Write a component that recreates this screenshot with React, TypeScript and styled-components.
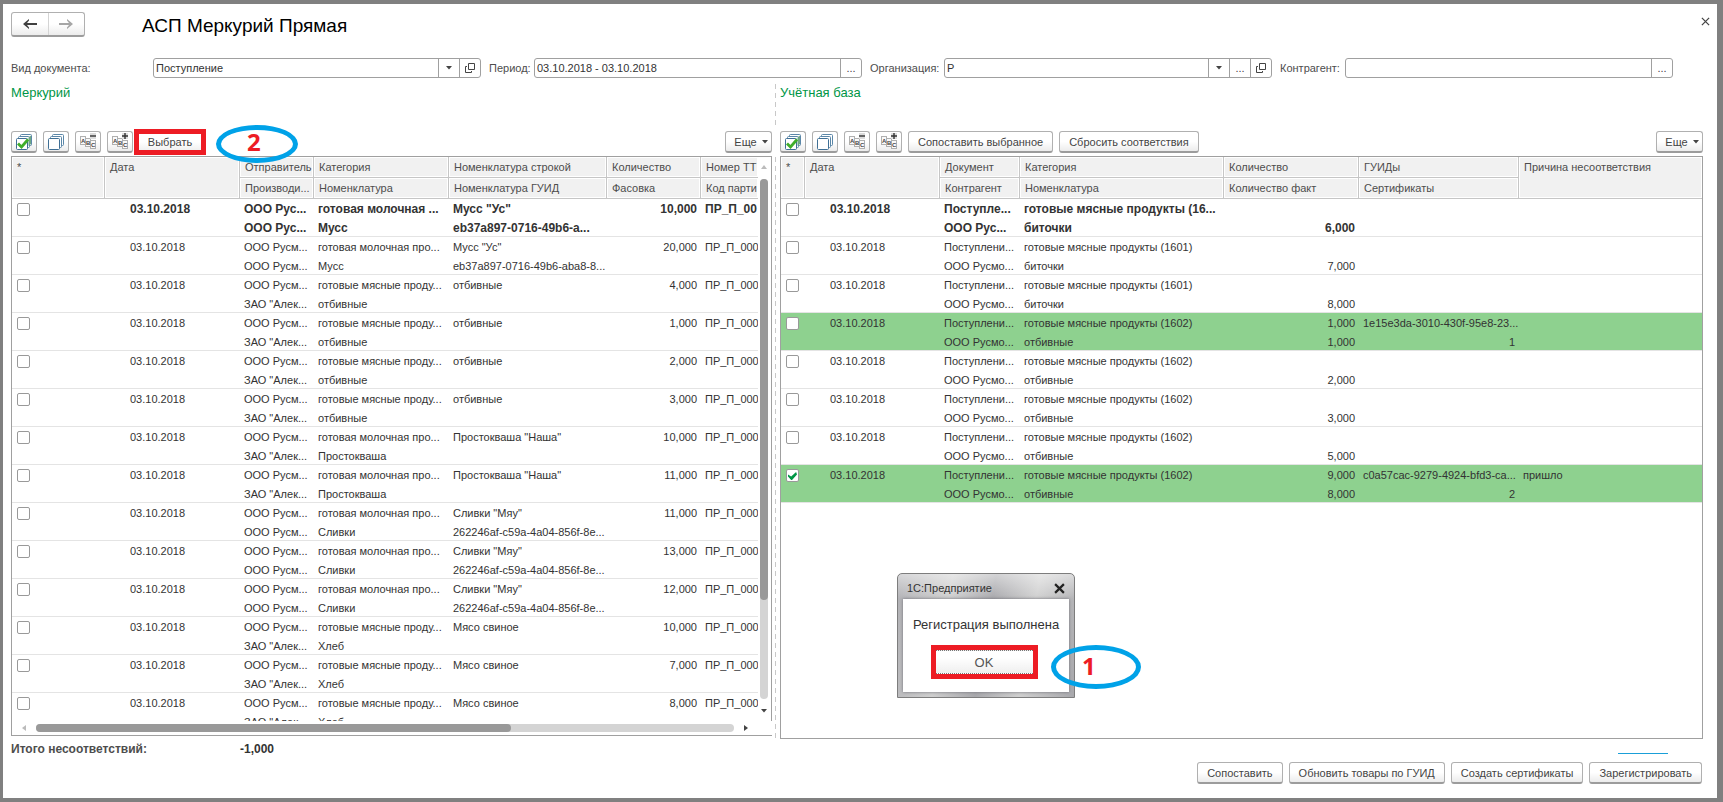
import React from "react";
import styled, { createGlobalStyle, css } from "styled-components";

const GlobalStyle = createGlobalStyle`
  *, *::before, *::after { box-sizing: border-box; }
  body {
    margin: 0;
    background: #808080;
    color: #333;
    font-family: "Liberation Sans", Arial, sans-serif;
    font-size: 11px;
  }
  button, input { font: inherit; color: inherit; margin: 0; }
  button { cursor: pointer; }
`;

const BLUE = "#00a2e8";
const RED = "#ed1c24";
const GREEN = "#009646";
const LINE = "#a0a0a0";

/* ---------- window ---------- */

const Frame = styled.div`
  height: 100vh;
  padding: 4px 6px 4px 3px;
`;

const Page = styled.main`
  height: 100%;
  display: flex;
  flex-direction: column;
  padding: 8px 14px 14px 8px;
  background: #fff;
`;

const Header = styled.header`
  display: flex;
  align-items: flex-start;
  height: 25px;
  margin-bottom: 21px;
`;

const Title = styled.h1`
  flex: 1;
  margin: 0 0 0 57px;
  font-size: 19px;
  line-height: 28px;
  font-weight: 400;
  color: #000;
`;

const raised = css`
  border: 1px solid #b0b0b0;
  border-bottom: 2px solid #9c9c9c;
  border-radius: 3px;
  background: linear-gradient(#fff 50%, #ececec);
`;

const NavGroup = styled.nav`
  display: flex;
  width: 74px;
  height: 25px;
  ${raised}
`;

const NavButton = styled.button<{ $muted?: boolean }>`
  flex: 1;
  display: flex;
  align-items: center;
  justify-content: center;
  padding: 0;
  border: 0;
  background: none;
  color: ${(p) => (p.$muted ? "#a6a6a6" : "#404040")};
  & + & { border-left: 1px solid #d4d4d4; }
`;

const CloseButton = styled.button`
  display: flex;
  margin: 4px -7px 0 0;
  padding: 1px 0;
  border: 0;
  background: none;
  color: #444;
`;

/* ---------- filters ---------- */

const Filters = styled.form`
  display: flex;
  gap: 8px;
  margin-right: 30px;
`;

const FilterItem = styled.div<{ $label: number }>`
  flex: 1 1 ${(p) => p.$label}px;
  display: flex;
  align-items: center;
  min-width: 0;
  & > label { flex: none; width: ${(p) => p.$label}px; color: #4d4d4d; white-space: nowrap; }
`;

const Field = styled.div`
  flex: 1;
  display: flex;
  min-width: 0;
  height: 20px;
  border: 1px solid ${LINE};
  border-radius: 3px;
  background: #fff;
`;

const FieldInput = styled.input`
  flex: 1;
  min-width: 0;
  padding: 0 2px;
  border: 0;
  outline: 0;
  background: none;
`;

const FieldButton = styled.button`
  width: 21px;
  display: flex;
  align-items: center;
  justify-content: center;
  padding: 0;
  border: 0;
  border-left: 1px solid ${LINE};
  background: none;
  color: #444;
`;

/* ---------- panels ---------- */

const Panels = styled.div`
  flex: 1;
  display: flex;
  min-height: 0;
  margin-top: 6px;
`;

const Panel = styled.section<{ $grow: number }>`
  position: relative;
  flex: ${(p) => p.$grow} 1 0;
  display: flex;
  flex-direction: column;
  min-width: 0;
`;

const LeftPanel = styled(Panel)`
  padding-bottom: 3px;
`;

const PanelTitle = styled.h2`
  margin: 0;
  height: 45px;
  font-size: 13px;
  line-height: 18px;
  font-weight: 400;
  color: ${GREEN};
`;

const Splitter = styled.div`
  flex: none;
  width: 8px;
  padding-left: 3px;
  display: flex;
  flex-direction: column;
  align-items: flex-start;
  gap: 29px;
`;

const SplitLine = styled.span<{ $tall?: boolean }>`
  width: 1px;
  ${(p) => (p.$tall ? "flex: 1;" : "height: 44px;")}
  background: repeating-linear-gradient(#c8c8c8 0 5px, #fff 5px 9px);
`;

const Toolbar = styled.div`
  display: flex;
  align-items: center;
  gap: 6px;
  height: 26px;
  margin-bottom: 1px;
`;

const Button = styled.button`
  display: inline-flex;
  align-items: center;
  justify-content: center;
  height: 22px;
  padding: 0 9px;
  white-space: nowrap;
  color: #444;
  ${raised}
`;

const IconButton = styled(Button)`
  width: 26px;
  padding: 0;
`;

const MoreButton = styled(Button)`
  gap: 5px;
  width: 47px;
  padding: 0 0 0 5px;
  margin-left: auto;
`;

const PickButton = styled.button`
  width: 72px;
  height: 26px;
  margin-left: -5px;
  padding: 0;
  border: 5px solid ${RED};
  background: linear-gradient(#fff 50%, #f0f0f0);
  color: #444;
`;

const Callout = styled.div`
  position: absolute;
  display: flex;
  align-items: center;
  color: ${RED};
  font: bold 24px/24px "Open Sans", sans-serif;
  border: 5px solid ${BLUE};
  border-radius: 50%;
`;

const PickCallout = styled(Callout)`
  left: 205px;
  top: 41px;
  z-index: 1;
  width: 82px;
  height: 38px;
  padding: 0 0 4px 26px;
`;

const OkCallout = styled(Callout)`
  left: 153px;
  top: 71px;
  width: 90px;
  height: 44px;
  padding: 0 0 2px 26px;
`;

/* ---------- grids ---------- */

const GridFrame = styled.div`
  flex: 1;
  display: flex;
  flex-direction: column;
  min-height: 0;
  border: 1px solid ${LINE};
`;

const LeftGridFrame = styled(GridFrame)`
  border-right: 0;
`;

const GridTop = styled.div`
  flex: 1;
  display: flex;
  min-height: 0;
  border-right: 1px solid ${LINE};
`;

const Viewport = styled.div`
  flex: 1;
  min-width: 0;
  min-height: 0;
  overflow: hidden;
`;

const Table = styled.table`
  width: 100%;
  table-layout: fixed;
  border-collapse: separate;
  border-spacing: 0;
`;

const Th = styled.th<{ $last?: boolean }>`
  height: 21px;
  padding: 0 0 0 5px;
  overflow: hidden;
  vertical-align: top;
  text-align: left;
  font-weight: 400;
  line-height: 20px;
  white-space: nowrap;
  color: #4d4d4d;
  background: #f1f1f1;
  border-bottom: 1px solid #c6c6c6;
  border-right: ${(p) => (p.$last ? "0" : "1px solid #c6c6c6")};
  box-shadow: inset 0 0 0 1px #fff;
`;

const Tr = styled.tr<{ $bold?: boolean; $matched?: boolean }>`
  ${(p) => p.$bold && "font-weight: 700; font-size: 12px;"}
  background: ${(p) => (p.$matched ? "#8ed18f" : "#fff")};
`;

const Td = styled.td<{ $date?: boolean }>`
  height: 38px;
  padding: 0 4px 0 ${(p) => (p.$date ? 25 : 4)}px;
  overflow: hidden;
  vertical-align: top;
  white-space: nowrap;
  box-shadow: inset 0 -1px #e4e4e4;
`;

const CheckTd = styled(Td)`
  padding: 4px 0 0 5px;
`;

const Line = styled.div<{ $right?: boolean }>`
  height: 19px;
  line-height: 21px;
  text-align: ${(p) => (p.$right ? "right" : "left")};
`;

const CheckBox = styled.input`
  appearance: none;
  display: block;
  width: 13px;
  height: 13px;
  border: 1px solid #999;
  border-radius: 2px;
  background: #fff;
  &:checked::after {
    content: "";
    display: block;
    width: 9px;
    height: 8px;
    margin: 2px 1px;
    background: ${GREEN};
    clip-path: polygon(0 30%, 35% 55%, 90% 0, 100% 30%, 45% 100%, 35% 100%, 0 55%);
  }
`;

/* ---------- scroll bars ---------- */

const VBar = styled.div`
  flex: none;
  width: 13px;
  display: flex;
  flex-direction: column;
  align-items: center;
  gap: 10px;
  padding: 8px 2px 8px 0;
`;

const HBar = styled.div`
  flex: none;
  height: 14px;
  display: flex;
  align-items: center;
  gap: 10px;
  padding: 0 24px 0 10px;
`;

const Track = styled.div<{ $vertical?: boolean }>`
  flex: 1;
  display: flex;
  ${(p) => (p.$vertical ? "flex-direction: column; width: 8px;" : "height: 8px;")}
  border-radius: 4px;
  background: #d4d4d4;
`;

const Thumb = styled.div<{ $share: number }>`
  flex: 0 0 ${(p) => p.$share}%;
  border-radius: 4px;
  background: #999;
`;

/* ---------- dialog ---------- */

const Dialog = styled.div`
  position: absolute;
  left: 117px;
  top: 489px;
  width: 178px;
  height: 125px;
  display: flex;
  flex-direction: column;
  padding: 0 5px 5px;
  border: 1px solid #7d7d7d;
  border-radius: 5px 5px 0 0;
  background:
    linear-gradient(rgba(255, 255, 255, 0.5), rgba(255, 255, 255, 0) 25px),
    linear-gradient(100deg, #b0b0b4, #cfcfcf 28%, #a8a8ac 50%, #d0d0d0 72%, #a8a8ac);
`;

const DialogBar = styled.div`
  flex: none;
  display: flex;
  align-items: center;
  justify-content: space-between;
  height: 25px;
  padding: 3px 4px 0 4px;
`;

const DialogClose = styled.button`
  display: flex;
  padding: 0;
  border: 0;
  background: none;
  color: #222;
`;

const DialogBody = styled.div`
  flex: 1;
  display: flex;
  flex-direction: column;
  align-items: center;
  padding-top: 16px;
  background: #fff;
  box-shadow: 0 0 3px #707078;
  font-size: 13px;
`;

const Message = styled.p`
  margin: 0 0 15px;
  line-height: 20px;
  white-space: nowrap;
`;

const OkButton = styled.button`
  width: 97px;
  height: 24px;
  margin-right: 4px;
  padding: 0;
  border: 0;
  border-top: 1px dotted #777;
  border-bottom: 1px dotted #777;
  outline: 5px solid ${RED};
  background: linear-gradient(#fff 30%, #efefef);
  color: #555;
`;

/* ---------- footer ---------- */

const Totals = styled.div`
  display: flex;
  align-items: center;
  height: 18px;
  margin: 1px 0 4px;
  font-size: 12px;
  font-weight: 700;
`;

const TotalLabel = styled.span`
  width: 229px;
  color: #4d4d4d;
`;

const Progress = styled.span`
  width: 50px;
  height: 1px;
  margin: 9px 35px 0 auto;
  background: #1a9fd8;
`;

const Actions = styled.footer`
  display: flex;
  justify-content: flex-end;
  gap: 6px;
  margin-right: 1px;
`;

/* ---------- icons ---------- */

const Caret = ({ dir = "down", color = "#444" }: { dir?: "down" | "up" | "left" | "right"; color?: string }) => {
  const shapes = { down: "0,0 6,0 3,3.5", up: "0,4 6,4 3,0", left: "4,0 4,6 0,3", right: "0,0 0,6 4,3" };
  const flat = dir === "down" || dir === "up";
  return (
    <svg width={flat ? 6 : 4} height={flat ? 4 : 6} aria-hidden="true">
      <polygon points={shapes[dir]} fill={color} />
    </svg>
  );
};

const Arrow = ({ back }: { back?: boolean }) => (
  <svg width="14" height="10" viewBox="0 0 14 10" fill="currentColor" aria-hidden="true">
    <path d={back ? "M0 5L6 0V1.500L4 4H14V6H4L6 8.500V10Z" : "M14 5L8 0V1.500L10 4H0V6H10L8 8.500V10Z"} />
  </svg>
);

const Cross = ({ size, weight }: { size: number; weight: number }) => (
  <svg width={size} height={size} viewBox="0 0 10 10" stroke="currentColor" strokeWidth={weight} aria-hidden="true">
    <path d="M1 1l8 8M9 1L1 9" />
  </svg>
);

const OpenIcon = () => (
  <svg width="10" height="10" viewBox="0 0 10 10" fill="none" stroke="currentColor" aria-hidden="true">
    <path d="M3.500.500h6v6h-6z M2 3.500H.500v6h6V8" />
  </svg>
);

const StackIcon = ({ checked }: { checked?: boolean }) => (
  <svg width="16" height="16" viewBox="0 0 16 16" fill="#fff" stroke="#5b87a8" aria-hidden="true">
    <rect x="4.500" y=".5" width="11" height="11" rx="1" />
    <rect x="2.500" y="2.500" width="11" height="11" rx="1" />
    <rect x=".5" y="4.500" width="11" height="11" rx="1" stroke="#3f6f95" />
    {checked && (
      <>
        <path d="M12.500 3.500L15 1.500V10l-2.500 2z" fill="#6fa886" stroke="none" />
        <path d="M2 9.500l3.500 3.500L12 5.500" fill="none" stroke="#3fae2a" strokeWidth="2.800" />
      </>
    )}
  </svg>
);

const AbcIcon = ({ plus }: { plus?: boolean }) => (
  <svg width="17" height="17" viewBox="0 0 17 17" fill="#fafafa" stroke="#b0b0b0" aria-hidden="true">
    <rect x=".5" y="3.500" width="5" height="8" />
    <rect x="5.500" y="5.500" width="5" height="8" />
    <rect x="10.500" y="7.500" width="5" height="8" />
    <g fill="#444" stroke="none" fontSize="6" fontWeight="700">
      <text x="1" y="10">A</text>
      <text x="6" y="12">B</text>
      <text x="11" y="14">C</text>
    </g>
    <rect x="10" y="0" width="6" height="6" fill="#dcdcdc" stroke="none" />
    <path d={plus ? "M10 3h6M13 0v6" : "M10 3h6"} stroke="#333" strokeWidth="1.400" />
  </svg>
);

const MarkTools = () => (
  <>
    <IconButton aria-label="Отметить все"><StackIcon checked /></IconButton>
    <IconButton aria-label="Снять отметки"><StackIcon /></IconButton>
    <IconButton aria-label="Свернуть"><AbcIcon /></IconButton>
    <IconButton aria-label="Развернуть"><AbcIcon plus /></IconButton>
  </>
);

const More = () => (
  <MoreButton>Еще <Caret /></MoreButton>
);

/* ---------- data ---------- */

type Pair = [string, string];
type Row = { bold?: boolean; matched?: boolean; cells: Pair[] };

const DATE = "03.10.2018";
const TTN = "ПР_П_000";
const RUS = "ООО Русм...";
const ALEX = 'ЗАО "Алек...';
const MILK = "готовая молочная про...";
const MEAT = "готовые мясные проду...";

const mercury = (maker: string, cat: string, item: string, line: string, guid: string, qty: string): Row => ({
  cells: [[RUS, maker], [cat, item], [line, guid], [qty, ""], [TTN, ""]],
});

const mercuryRows: Row[] = [
  {
    bold: true,
    cells: [["ООО Рус...", "ООО Рус..."], ["готовая молочная ...", "Мусс"], ['Мусс "Ус"', "eb37a897-0716-49b6-a..."], ["10,000", ""], ["ПР_П_00", ""]],
  },
  mercury(RUS, MILK, "Мусс", 'Мусс "Ус"', "eb37a897-0716-49b6-aba8-8...", "20,000"),
  mercury(ALEX, MEAT, "отбивные", "отбивные", "", "4,000"),
  mercury(ALEX, MEAT, "отбивные", "отбивные", "", "1,000"),
  mercury(ALEX, MEAT, "отбивные", "отбивные", "", "2,000"),
  mercury(ALEX, MEAT, "отбивные", "отбивные", "", "3,000"),
  mercury(ALEX, MILK, "Простокваша", 'Простокваша "Наша"', "", "10,000"),
  mercury(ALEX, MILK, "Простокваша", 'Простокваша "Наша"', "", "11,000"),
  mercury(RUS, MILK, "Сливки", 'Сливки "Мяу"', "262246af-c59a-4a04-856f-8e...", "11,000"),
  mercury(RUS, MILK, "Сливки", 'Сливки "Мяу"', "262246af-c59a-4a04-856f-8e...", "13,000"),
  mercury(RUS, MILK, "Сливки", 'Сливки "Мяу"', "262246af-c59a-4a04-856f-8e...", "12,000"),
  mercury(ALEX, MEAT, "Хлеб", "Мясо свиное", "", "10,000"),
  mercury(ALEX, MEAT, "Хлеб", "Мясо свиное", "", "7,000"),
  mercury(ALEX, MEAT, "Хлеб", "Мясо свиное", "", "8,000"),
];

const ledger = (code: string, item: string, qty: string, fact: string, guid = "", certs = "", reason = ""): Row => ({
  matched: guid !== "",
  cells: [["Поступлени...", "ООО Русмо..."], [`готовые мясные продукты (${code})`, item], [qty, fact], [guid, certs], [reason, ""]],
});

const ledgerRows: Row[] = [
  {
    bold: true,
    cells: [["Поступле...", "ООО Рус..."], ["готовые мясные продукты (16...", "биточки"], ["", "6,000"], ["", ""], ["", ""]],
  },
  ledger("1601", "биточки", "", "7,000"),
  ledger("1601", "биточки", "", "8,000"),
  ledger("1602", "отбивные", "1,000", "1,000", "1e15e3da-3010-430f-95e8-23...", "1"),
  ledger("1602", "отбивные", "", "2,000"),
  ledger("1602", "отбивные", "", "3,000"),
  ledger("1602", "отбивные", "", "5,000"),
  ledger("1602", "отбивные", "9,000", "8,000", "c0a57cac-9279-4924-bfd3-ca...", "2", "пришло"),
];

const Col = styled.col<{ $w: number }>`
  width: ${(p) => p.$w}px;
`;

type GridProps = { widths: number[]; heads: Pair[]; rows: Row[]; checked?: number };

const isAmount = (text: string) => /^\d+(,\d+)?$/.test(text);

const Grid = ({ widths, heads, rows, checked }: GridProps) => (
  <Table>
    <colgroup>{widths.map((w, i) => <Col key={i} $w={w} />)}</colgroup>
    <thead>
      <tr>
        <Th rowSpan={2}>*</Th>
        {heads.map(([top, bottom], i) => (
          <Th key={i} rowSpan={bottom ? 1 : 2} $last={i === heads.length - 1}>{top}</Th>
        ))}
      </tr>
      <tr>
        {heads.map(([, bottom], i) => bottom && <Th key={i} $last={i === heads.length - 1}>{bottom}</Th>)}
      </tr>
    </thead>
    <tbody>
      {rows.map((row, r) => (
        <Tr key={r} $bold={row.bold} $matched={row.matched}>
          <CheckTd><CheckBox type="checkbox" defaultChecked={r === checked} aria-label={`Строка ${r + 1}`} /></CheckTd>
          <Td $date><Line>{DATE}</Line></Td>
          {row.cells.map((cell, c) => (
            <Td key={c}>
              {cell.map((text, l) => <Line key={l} $right={isAmount(text)}>{text}</Line>)}
            </Td>
          ))}
        </Tr>
      ))}
    </tbody>
  </Table>
);

export default function App() {
  return (
    <Frame>
      <GlobalStyle />
      <Page>
        <Header>
          <NavGroup>
            <NavButton aria-label="Назад"><Arrow back /></NavButton>
            <NavButton aria-label="Вперед" $muted><Arrow /></NavButton>
          </NavGroup>
          <Title>АСП Меркурий Прямая</Title>
          <CloseButton aria-label="Закрыть"><Cross size={9} weight={1.4} /></CloseButton>
        </Header>

        <Filters onSubmit={(e) => e.preventDefault()}>
          <FilterItem $label={142}>
            <label htmlFor="kind">Вид документа:</label>
            <Field>
              <FieldInput id="kind" defaultValue="Поступление" />
              <FieldButton type="button" aria-label="Выбрать вид"><Caret /></FieldButton>
              <FieldButton type="button" aria-label="Открыть вид"><OpenIcon /></FieldButton>
            </Field>
          </FilterItem>
          <FilterItem $label={45}>
            <label htmlFor="period">Период:</label>
            <Field>
              <FieldInput id="period" defaultValue="03.10.2018 - 03.10.2018" />
              <FieldButton type="button">...</FieldButton>
            </Field>
          </FilterItem>
          <FilterItem $label={74}>
            <label htmlFor="org">Организация:</label>
            <Field>
              <FieldInput id="org" defaultValue="Р" />
              <FieldButton type="button" aria-label="Выбрать организацию"><Caret /></FieldButton>
              <FieldButton type="button">...</FieldButton>
              <FieldButton type="button" aria-label="Открыть организацию"><OpenIcon /></FieldButton>
            </Field>
          </FilterItem>
          <FilterItem $label={65}>
            <label htmlFor="partner">Контрагент:</label>
            <Field>
              <FieldInput id="partner" />
              <FieldButton type="button">...</FieldButton>
            </Field>
          </FilterItem>
        </Filters>

        <Panels>
          <LeftPanel $grow={761}>
            <PanelTitle>Меркурий</PanelTitle>
            <Toolbar>
              <MarkTools />
              <PickButton>Выбрать</PickButton>
              <More />
            </Toolbar>
            <PickCallout>2</PickCallout>
            <LeftGridFrame>
              <GridTop>
                <Viewport>
                  <Grid
                    widths={[93, 135, 74, 135, 158, 94, 57]}
                    heads={[
                      ["Дата", ""],
                      ["Отправитель", "Производи..."],
                      ["Категория", "Номенклатура"],
                      ["Номенклатура строкой", "Номенклатура ГУИД"],
                      ["Количество", "Фасовка"],
                      ["Номер ТТ", "Код парти"],
                    ]}
                    rows={mercuryRows}
                  />
                </Viewport>
                <VBar>
                  <Caret dir="up" color="#bbb" />
                  <Track $vertical><Thumb $share={81} /></Track>
                  <Caret />
                </VBar>
              </GridTop>
              <HBar>
                <Caret dir="left" color="#bbb" />
                <Track><Thumb $share={68} /></Track>
                <Caret dir="right" />
              </HBar>
            </LeftGridFrame>
          </LeftPanel>

          <Splitter>
            <SplitLine />
            <SplitLine $tall />
          </Splitter>

          <Panel $grow={923}>
            <PanelTitle>Учётная база</PanelTitle>
            <Toolbar>
              <MarkTools />
              <Button>Сопоставить выбранное</Button>
              <Button>Сбросить соответствия</Button>
              <More />
            </Toolbar>
            <GridFrame>
              <Viewport>
                <Grid
                  widths={[24, 135, 80, 204, 135, 160, 183]}
                  heads={[
                    ["Дата", ""],
                    ["Документ", "Контрагент"],
                    ["Категория", "Номенклатура"],
                    ["Количество", "Количество факт"],
                    ["ГУИДы", "Сертификаты"],
                    ["Причина несоответствия", ""],
                  ]}
                  rows={ledgerRows}
                  checked={7}
                />
              </Viewport>
            </GridFrame>
            <Dialog role="dialog" aria-labelledby="dialog-title">
              <DialogBar>
                <span id="dialog-title">1С:Предприятие</span>
                <DialogClose aria-label="Закрыть сообщение"><Cross size={11} weight={2} /></DialogClose>
              </DialogBar>
              <DialogBody>
                <Message>Регистрация выполнена</Message>
                <OkButton>OK</OkButton>
              </DialogBody>
              <OkCallout>1</OkCallout>
            </Dialog>
          </Panel>
        </Panels>

        <Totals>
          <TotalLabel>Итого несоответствий:</TotalLabel>
          <span>-1,000</span>
          <Progress />
        </Totals>

        <Actions>
          <Button>Сопоставить</Button>
          <Button>Обновить товары по ГУИД</Button>
          <Button>Создать сертификаты</Button>
          <Button>Зарегистрировать</Button>
        </Actions>
      </Page>
    </Frame>
  );
}
